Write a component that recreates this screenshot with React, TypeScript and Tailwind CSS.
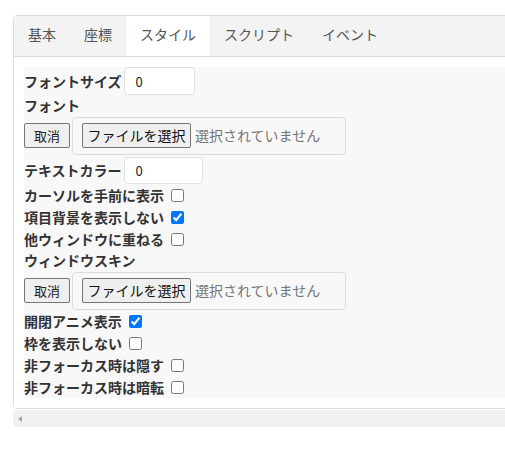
import React from "react";

const jp = { fontFamily: '"Noto Sans CJK JP", "Noto Sans", sans-serif' };

const tabs = ["基本", "座標", "スタイル", "スクリプト", "イベント"];

function Label({ children }: { children: React.ReactNode }) {
    return <span className="text-[14px] font-semibold text-[#333]">{children}</span>;
}

function CheckRow({ label, checked }: { label: string; checked?: boolean }) {
    return (
        <div className="flex h-[22px] items-center">
            <Label>{label}</Label>
            <input
                type="checkbox"
                defaultChecked={checked}
                className="ml-[7px] size-[13px] accent-[#0075ff]"
            />
        </div>
    );
}

function FileRow() {
    return (
        <div className="flex h-[39px] items-center">
            <button className="h-[25px] w-[46px] rounded-[2px] border border-[#767676] bg-[#efefef] text-[13px] text-[#222]">
                取消
            </button>
            <div className="ml-[2px] flex h-[38px] w-[274px] items-center rounded-[4px] border border-[#dcdcdc] pl-[9px]">
                <button className="h-[25px] w-[109px] rounded-[2px] border border-[#767676] bg-[#efefef] text-[14px] text-[#111]">
                    ファイルを選択
                </button>
                <span className="ml-[4px] text-[14px] text-[#757575]">選択されていません</span>
            </div>
        </div>
    );
}

function InputRow({ label, h, w }: { label: string; h: string; w: string }) {
    return (
        <div className={`flex items-center ${h}`}>
            <Label>{label}</Label>
            <input
                defaultValue="0"
                className={`ml-[2px] h-full ${w} rounded-[4px] border border-[#e0e0e0] bg-white pl-[11px] text-[13px] text-[#222] outline-none`}
            />
        </div>
    );
}

export default function App() {
    return (
        <div className="h-[463px] w-[505px] overflow-hidden bg-white" style={jp}>
            <div className="ml-[13px] mt-[15px] w-[540px] rounded-[4px] border border-[#dddddd]">
                {/* Tabs */}
                <div className="flex h-[41px] border-b border-[#dddddd] bg-[#f3f3f3]">
                    {tabs.map((t) => (
                        <div
                            key={t}
                            className={`flex items-center px-[14px] pb-[3px] text-[14px] text-[#555] ${t === "スタイル" ? "bg-white" : ""}`}
                        >
                            {t}
                        </div>
                    ))}
                </div>

                {/* Content */}
                <div className="bg-white p-[10px]">
                    <div className="flex flex-col bg-[#f8f8f8]">
                        <InputRow label="フォントサイズ" h="h-[28px]" w="w-[71px]" />
                        <div className="flex h-[21px] items-center">
                            <Label>フォント</Label>
                        </div>
                        <FileRow />
                        <div className="mt-[2px]">
                            <InputRow label="テキストカラー" h="h-[27px]" w="w-[79px]" />
                        </div>
                        <CheckRow label="カーソルを手前に表示" />
                        <CheckRow label="項目背景を表示しない" checked />
                        <CheckRow label="他ウィンドウに重ねる" />
                        <div className="flex h-[21px] items-center">
                            <Label>ウィンドウスキン</Label>
                        </div>
                        <FileRow />
                        <CheckRow label="開閉アニメ表示" checked />
                        <CheckRow label="枠を表示しない" />
                        <CheckRow label="非フォーカス時は隠す" />
                        <CheckRow label="非フォーカス時は暗転" />
                    </div>
                </div>
            </div>

            {/* Horizontal scrollbar */}
            <div className="ml-[13px] mt-px flex h-[17px] w-[540px] items-center bg-[#f1f1f1]">
                <span className="ml-[5px] h-0 w-0 border-y-[3px] border-r-[4px] border-y-transparent border-r-[#a3a3a3]" />
            </div>
        </div>
    );
}
